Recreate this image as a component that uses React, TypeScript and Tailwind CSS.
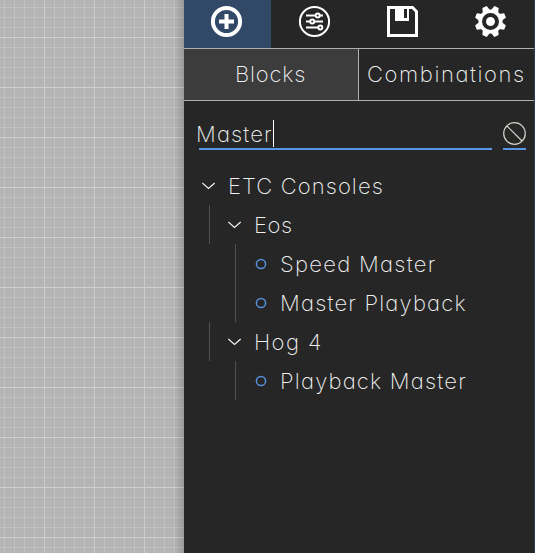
import type { ReactNode } from 'react';

const label = "whitespace-nowrap font-extralight text-[22px] leading-[39px] text-[#f0f0f0] [font-feature-settings:'cv11','ss03']";

function Chevron() {
  return (
    <svg className="h-[39px] w-[14px] shrink-0" viewBox="0 0 14 39" fill="none" stroke="#f2f2f2" strokeWidth="1.25">
      <path d="M.3 17 6.5 22.5 12.7 17" />
    </svg>
  );
}

function Branch({ children, spacing }: { children: ReactNode; spacing: string }) {
  return (
    <div className="ml-[25px] flex h-[39px] items-center border-l border-[#505050] pl-[18px]">
      <Chevron />
      <span className={`${label} ml-[12px] pt-[2px] ${spacing}`}>{children}</span>
    </div>
  );
}

function Leaf({ children, spacing }: { children: ReactNode; spacing: string }) {
  return (
    <div className="ml-[51px] flex h-[39px] items-center border-l border-[#505050] pl-[19px]">
      <svg className="h-[12px] w-[12px] shrink-0" viewBox="0 0 12 12" fill="none" stroke="#5790dc" strokeWidth="1.5">
        <circle cx="6" cy="6" r="4.6" />
      </svg>
      <span className={`${label} ml-[13px] pt-[2px] ${spacing}`}>{children}</span>
    </div>
  );
}

const teeth = [22.5, 67.5, 112.5, 157.5, 202.5, 247.5, 292.5, 337.5];

export default function App() {
  return (
    <div className="flex h-[553px] w-[535px] overflow-hidden bg-[#262626] font-['Inter',sans-serif]">
      <div className="h-full w-[184px] shrink-0 bg-[#b7b7b7] bg-[linear-gradient(90deg,transparent_174px,#00000028_184px),linear-gradient(90deg,#cbcbcb_1px,transparent_1px),linear-gradient(#cfcfcf_1px,transparent_1px),linear-gradient(90deg,#c1c1c1_1px,transparent_1px),linear-gradient(#c1c1c1_1px,transparent_1px),linear-gradient(90deg,#b4b4b4_1px,transparent_1px),linear-gradient(#b4b4b4_1px,transparent_1px)] bg-[length:184px_100%,50px_50px,50px_50px,10px_10px,10px_10px,2px_2px,2px_2px] bg-[position:0_0,44px_37px,44px_37px,4px_7px,4px_7px,1px_0,1px_0]" />
      <div className="flex w-[350px] shrink-0 flex-col">
        <div className="flex h-[48px] shrink-0">
          <div className="flex w-[87px] justify-center bg-[#314866] pt-[5px] pr-[2px]">
            <svg className="h-[33px] w-[33px]" viewBox="0 0 33 33" fill="none" stroke="white">
              <circle cx="16.5" cy="16.5" r="13.6" strokeWidth="4" />
              <path d="M16.5 9v15M9 16.5h15" strokeWidth="4" />
            </svg>
          </div>
          <div className="flex w-[88px] justify-center pt-[5px] pr-[1px]">
            <svg className="h-[33px] w-[33px]" viewBox="0 0 33 33" fill="none" stroke="white" strokeWidth="2">
              <circle cx="16.5" cy="16.5" r="14.6" />
              <path d="M8 10.5h9.5m4.5 0h3M8 16.5h4m4.5 0H25M8 22.5h12" />
              <circle cx="19.7" cy="10.5" r="2" />
              <circle cx="14.2" cy="16.5" r="2" />
              <circle cx="22.3" cy="22.5" r="2" />
            </svg>
          </div>
          <div className="flex w-[88px] justify-center pt-[5px] pr-[1px]">
            <svg className="h-[33px] w-[33px]" viewBox="0 0 33 33">
              <path fill="none" stroke="white" strokeWidth="3" d="M2.5 2.5h24l4 4v24h-28z" />
              <path fill="white" fillRule="evenodd" d="M9 3h14v13H9zM18 4h3v9h-3z" />
            </svg>
          </div>
          <div className="flex w-[87px] justify-center pt-[5px]">
            <svg className="h-[33px] w-[33px]" viewBox="0 0 33 33">
              <g fill="white">
                <circle cx="16.5" cy="16.5" r="12" />
                {teeth.map((angle) => (
                  <path key={angle} d="M12.6 6 14.2 .8h4.6L20.4 6z" transform={`rotate(${angle} 16.5 16.5)`} />
                ))}
              </g>
              <circle cx="16.5" cy="16.5" r="6.5" fill="none" stroke="#262626" strokeWidth="4" />
            </svg>
          </div>
        </div>
        <div className="flex h-[53px] shrink-0 border-y border-[#b0b0b0]">
          <div className="flex w-[175px] items-center border-r border-[#b0b0b0] bg-[#3c3c3c] pl-[51px]">
            <span className={`${label} tracking-[0.8px]`}>Blocks</span>
          </div>
          <div className="flex items-center pl-[8px]">
            <span className={`${label} tracking-[1.6px]`}>Combinations</span>
          </div>
        </div>
        <div className="mt-[18px] flex h-[31px] shrink-0 gap-[11px] pl-[12px]">
          <div className="ml-[3px] flex w-[293px] border-b-2 border-[#5994e5]">
            <span className={`${label} -ml-[3px] -mt-[4px] h-[30px] tracking-[1.15px]`}>Master</span>
            <span className="mt-[1px] h-[27px] w-px bg-white" />
          </div>
          <div className="flex w-[23px] justify-center border-b-2 border-[#5994e5] pt-[2px]">
            <svg className="h-[24px] w-[23px]" viewBox="0 0 23 24" fill="none" stroke="#d5d5cc" strokeWidth="1.2">
              <circle cx="11.5" cy="12.5" r="10.8" />
              <path d="m4 5 15 15" />
            </svg>
          </div>
        </div>
        <div className="mt-[16px] flex flex-col">
          <div className="flex h-[39px] items-center pl-[18px]">
            <Chevron />
            <span className={`${label} ml-[12px] pt-[2px] tracking-[1.1px]`}>ETC Consoles</span>
          </div>
          <Branch spacing="tracking-[0.6px]">Eos</Branch>
          <Leaf spacing="tracking-[1.3px]">Speed Master</Leaf>
          <Leaf spacing="tracking-[1.2px]">Master Playback</Leaf>
          <Branch spacing="tracking-[1.4px]">Hog 4</Branch>
          <Leaf spacing="tracking-[1.2px]">Playback Master</Leaf>
        </div>
      </div>
      <div className="w-px bg-[#2b405e]" />
    </div>
  );
}
